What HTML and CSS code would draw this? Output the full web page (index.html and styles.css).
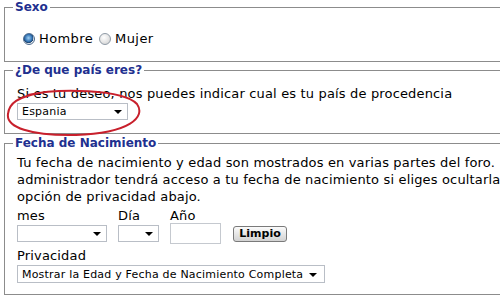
FILE: index.html
```html
<!DOCTYPE html>
<html lang="es">
<head>
<meta charset="utf-8">
<title>Perfil</title>
<link rel="stylesheet" href="styles.css">
</head>
<body>
<div class="page">
  <fieldset class="fs fs-sexo">
    <legend>Sexo</legend>
    <div class="radios">
      <span class="radio checked"></span><span class="rlabel">Hombre</span>
      <span class="radio"></span><span class="rlabel">Mujer</span>
    </div>
  </fieldset>

  <fieldset class="fs fs-pais">
    <legend>¿De que país eres?</legend>
    <p class="text">Si es tu deseo, nos puedes indicar cual es tu país de procedencia</p>
    <div class="pais-wrap">
      <div class="sel sel-pais"><span class="sel-text">Espania</span><span class="arrow"></span></div>
      <svg class="circle" width="140" height="52" viewBox="0 0 140 52">
        <path d="M22 7 C 52 0, 117 1, 131 16 C 140 29, 124 45, 70 47 C 24 48, 0 39, 2 26 C 3 15, 12 9, 34 5" fill="none" stroke="#c8202c" stroke-width="2"/>
      </svg>
    </div>
  </fieldset>

  <fieldset class="fs fs-fecha">
    <legend>Fecha de Nacimiento</legend>
    <p class="text para">Tu fecha de nacimiento y edad son mostrados en varias partes del foro.<br>administrador tendrá acceso a tu fecha de nacimiento si eliges ocultarla<br>opción de privacidad abajo.</p>
    <div class="date-row">
      <div class="field">
        <span class="flabel">mes</span>
        <div class="sel sel-mes"><span class="sel-text"></span><span class="arrow"></span></div>
      </div>
      <div class="field">
        <span class="flabel">Día</span>
        <div class="sel sel-dia"><span class="sel-text"></span><span class="arrow"></span></div>
      </div>
      <div class="field">
        <span class="flabel">Año</span>
        <div class="input-anio"></div>
      </div>
      <div class="btn">Limpio</div>
    </div>
    <span class="flabel priv-label">Privacidad</span>
    <div class="sel sel-priv"><span class="sel-text">Mostrar la Edad y Fecha de Nacimiento Completa</span><span class="arrow"></span></div>
  </fieldset>
</div>
</body>
</html>
```

FILE: styles.css
```css
html, body {
  margin: 0;
  padding: 0;
  background: #fff;
  overflow: hidden;
}
body {
  font-family: "DejaVu Sans", Verdana, sans-serif;
  font-size: 13px;
  letter-spacing: 0.16px;
  color: #000;
  width: 500px;
  height: 298px;
}
.page {
  width: 540px;
  padding-left: 4px;
}
.fs {
  margin: 0 0 1px 0;
  padding: 0 12px;
  border: 1px solid #8c8c8c;
  width: 520px;
  box-sizing: border-box;
}
.fs legend {
  font-size: 12px;
  font-weight: bold;
  letter-spacing: 0;
  color: #21308f;
  padding: 0 2px;
  margin-left: -4px;
  line-height: 14px;
}
.fs-sexo { padding-bottom: 14px; }
.radios {
  display: flex;
  align-items: center;
  margin-top: 16px;
  height: 17px;
  padding-left: 6px;
}
.radio {
  width: 12px;
  height: 12px;
  border-radius: 50%;
  box-sizing: border-box;
  border: 1px solid #8f9aa6;
  background: radial-gradient(circle at 40% 35%, #ffffff 0%, #e4e4e4 55%, #c8c8c8 100%);
}
.radio.checked {
  border-color: #4d6b8e;
  background: radial-gradient(circle at 45% 40%, #9fd0f5 0%, #2e6fb0 45%, #1d3f66 60%, #e2e6ea 62%, #f4f4f4 100%);
}
.rlabel {
  margin-left: 4px;
  margin-right: 6px;
  letter-spacing: 0.4px;
}
.text {
  margin: 0;
  line-height: 17px;
}
.fs-pais { padding-bottom: 13px; margin-bottom: 2px; }
.fs-pais .text { margin-top: 8px; }
.pais-wrap {
  position: relative;
  margin-top: 1px;
}
.sel {
  display: flex;
  align-items: center;
  box-sizing: border-box;
  height: 17px;
  border: 1px solid #b9bec6;
  background: #fff;
  font-size: 11px;
  letter-spacing: 0.2px;
  padding: 0 5px 0 4px;
}
.sel-text { flex: 1; white-space: nowrap; overflow: hidden; }
.arrow {
  width: 0;
  height: 0;
  border-left: 4px solid transparent;
  border-right: 4px solid transparent;
  border-top: 4px solid #000;
  margin-top: 1px;
}
.sel-pais { width: 111px; }
.circle {
  position: absolute;
  left: -11px;
  top: -15px;
}
.fs-fecha { padding-bottom: 11px; }
.para { margin-top: 4px; }
.date-row {
  display: flex;
  align-items: flex-end;
  margin-top: 2px;
}
.field {
  display: flex;
  flex-direction: column;
  margin-right: 11px;
}
.flabel {
  display: block;
  line-height: 17px;
}
.sel-mes { width: 90px; margin-top: 1px; margin-bottom: 2px; }
.sel-dia { width: 41px; margin-top: 1px; margin-bottom: 2px; }
.input-anio {
  width: 51px;
  height: 21px;
  box-sizing: border-box;
  border: 1px solid #c5c9cf;
  margin-top: -1px;
}
.btn {
  width: 54px;
  height: 16px;
  box-sizing: border-box;
  border: 1px solid #7a7a7a;
  border-radius: 3px;
  background: linear-gradient(#fbfbfb, #e2e2e2 60%, #d2d2d2);
  font-size: 11px;
  font-weight: bold;
  letter-spacing: 0;
  text-align: center;
  line-height: 14px;
  margin-left: 1px;
  margin-bottom: 2px;
}
.priv-label { margin-top: 3px; }
.sel-priv { width: 308px; height: 18px; margin-top: 1px; padding-left: 4px; padding-right: 7px; }
```
